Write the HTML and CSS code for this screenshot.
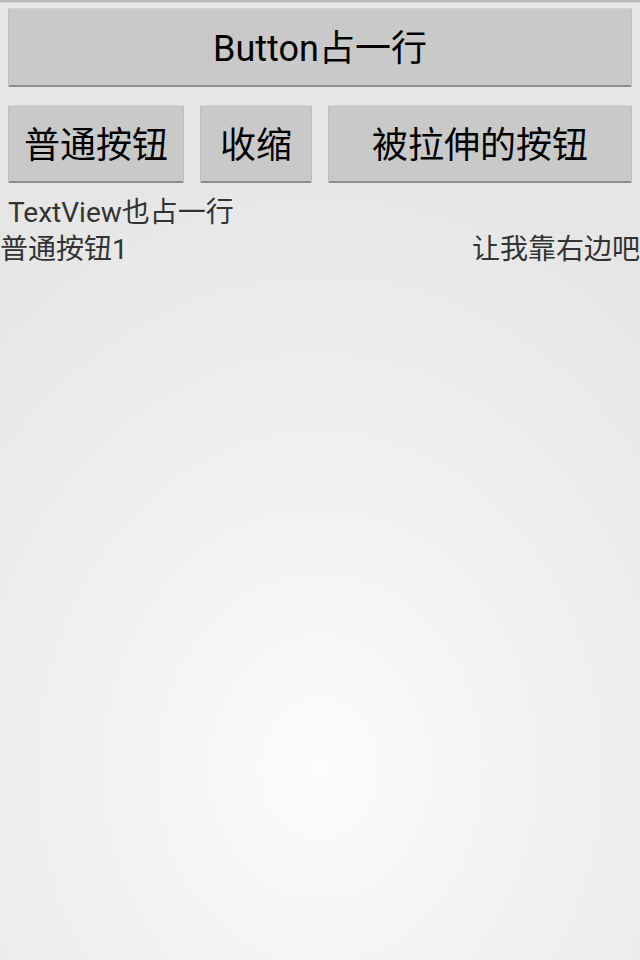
FILE: index.html
```html
<!DOCTYPE html>
<html lang="zh-CN">
<head>
<meta charset="utf-8">
<title>Layout</title>
<link rel="stylesheet" href="styles.css">
</head>
<body>
<div class="screen">
  <div class="topline"></div>
  <div class="row row-full">
    <div class="btn btn-full">Button占一行</div>
  </div>
  <div class="row row-three">
    <div class="btn btn-a">普通按钮</div>
    <div class="btn btn-b">收缩</div>
    <div class="btn btn-c">被拉伸的按钮</div>
  </div>
  <div class="tv">TextView也占一行</div>
  <div class="tv-row">
    <span class="tv-left">普通按钮1</span>
    <span class="tv-right">让我靠右边吧</span>
  </div>
</div>
</body>
</html>
```
FILE: styles.css
```css
html, body {
  margin: 0;
  padding: 0;
}
body {
  width: 640px;
  height: 960px;
  overflow: hidden;
  font-family: Roboto, "Noto Sans CJK SC", sans-serif;
}
.screen {
  width: 640px;
  height: 960px;
  background: radial-gradient(ellipse 520px 620px at 50% 80%, #fcfcfc 0%, #f2f2f2 40%, #e6e6e6 100%);
  box-sizing: border-box;
}
.topline {
  height: 2px;
  background: #b9b9b9;
  border-bottom: 1px solid #d6d6d6;
}
.row {
  display: flex;
  padding: 0 8px;
  gap: 16px;
}
.row-full {
  margin-top: 5px;
}
.row-three {
  margin-top: 18px;
}
.btn {
  box-sizing: border-box;
  height: 79px;
  padding-top: 4px;
  background: #c9c9c9;
  border-top: 1px solid #d0d0d0;
  border-left: 1px solid #bdbdbd;
  border-right: 1px solid #bdbdbd;
  border-bottom: 2px solid #8e8e8e;
  border-radius: 2px;
  display: flex;
  align-items: center;
  justify-content: center;
  font-size: 36px;
  color: #000;
  line-height: 1;
}
.btn-full {
  flex: 1;
}
.row-three .btn {
  height: 78px;
}
.btn-a {
  width: 176px;
}
.btn-b {
  width: 112px;
}
.btn-c {
  flex: 1;
}
.tv {
  margin-top: 11px;
  padding-left: 8px;
  font-size: 28px;
  line-height: 37px;
  color: #333;
}
.tv-row {
  display: flex;
  justify-content: space-between;
  font-size: 28px;
  line-height: 37px;
  color: #333;
}
```
